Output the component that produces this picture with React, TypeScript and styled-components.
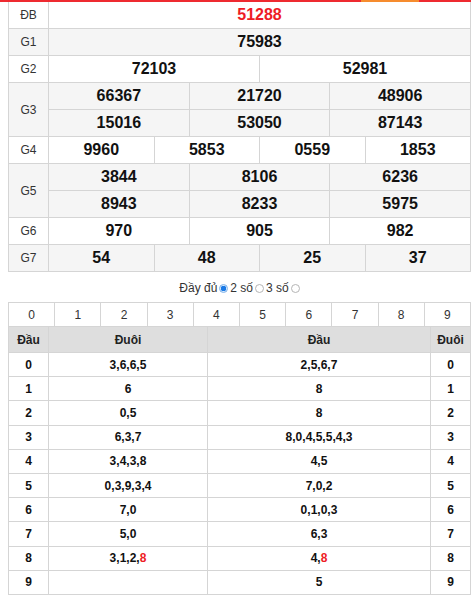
import React, { useState } from 'react';
import styled, { createGlobalStyle } from 'styled-components';

const Global = createGlobalStyle`
  html, body { margin: 0; padding: 0; background: #fff; }
  body { font-family: Arial, "Liberation Sans", sans-serif; color: #222; }
`;

const BORDER = '#d5d5d5';

const Page = styled.div`
  width: 471px;
`;

const TopBar = styled.div`
  height: 2px;
  background: linear-gradient(
    to right,
    #ee2a30 0,
    #ee2a30 361px,
    #f68c2e 361px,
    #f68c2e 419px,
    #ee2a30 419px
  );
`;

const Content = styled.div`
  padding-left: 8px;
`;

const PrizeGrid = styled.div`
  display: grid;
  grid-template-columns: 40px repeat(12, 1fr);
  width: 463px;
  box-sizing: border-box;
  border-left: 1px solid ${BORDER};
`;

const PrizeLabel = styled.div<{ $row: number; $rows: number; $alt: boolean }>`
  grid-column: 1;
  grid-row: ${p => p.$row} / span ${p => p.$rows};
  display: flex;
  align-items: center;
  justify-content: center;
  box-sizing: border-box;
  border-right: 1px solid ${BORDER};
  border-bottom: 1px solid ${BORDER};
  background: ${p => (p.$alt ? '#f5f5f5' : '#fff')};
  font-size: 12px;
  color: #333;
`;

const PrizeNum = styled.div<{ $row: number; $col: number; $span: number; $alt: boolean; $red?: boolean }>`
  grid-row: ${p => p.$row};
  grid-column: ${p => p.$col} / span ${p => p.$span};
  height: 27px;
  display: flex;
  align-items: center;
  justify-content: center;
  box-sizing: border-box;
  border-right: 1px solid ${BORDER};
  border-bottom: 1px solid ${BORDER};
  background: ${p => (p.$alt ? '#f5f5f5' : '#fff')};
  font-size: 16px;
  font-weight: bold;
  color: ${p => (p.$red ? '#ee1c25' : '#111')};
`;

const ModeBar = styled.div`
  display: flex;
  justify-content: center;
  align-items: center;
  gap: 2px;
  width: 463px;
  margin-top: 8px;
  height: 16px;
  margin-bottom: 6px;
  font-size: 12px;
  color: #333;
`;

const ModeOption = styled.label`
  display: inline-flex;
  align-items: center;
  gap: 2px;
  cursor: pointer;
`;

const Radio = styled.input.attrs({ type: 'radio' })`
  appearance: none;
  -webkit-appearance: none;
  width: 9px;
  height: 9px;
  margin: 1px 0 0 0;
  border-radius: 50%;
  box-sizing: border-box;
  border: 1px solid #b5b5b5;
  background: #fff;
  &:checked {
    border-color: #7fb3ea;
    background: radial-gradient(circle, #1a7ae6 0, #1a7ae6 2.6px, #d7e8fb 3px);
  }
`;

const DigitRow = styled.div`
  display: grid;
  grid-template-columns: repeat(10, 1fr);
  width: 463px;
  box-sizing: border-box;
  border-left: 1px solid ${BORDER};
  border-top: 1px solid ${BORDER};
`;

const DigitCell = styled.div`
  height: 24px;
  display: flex;
  align-items: center;
  justify-content: center;
  box-sizing: border-box;
  border-right: 1px solid ${BORDER};
  border-bottom: 1px solid ${BORDER};
  font-size: 12px;
  color: #333;
`;

const LotoGrid = styled.div`
  display: grid;
  grid-template-columns: 40px 159px 223px 40px;
  width: 463px;
  box-sizing: border-box;
  border-left: 1px solid ${BORDER};
`;

const LotoHead = styled.div`
  height: 26px;
  display: flex;
  align-items: center;
  justify-content: center;
  box-sizing: border-box;
  border-right: 1px solid ${BORDER};
  border-bottom: 1px solid ${BORDER};
  background: #dedede;
  font-size: 12px;
  font-weight: bold;
  color: #222;
`;

const LotoCell = styled.div`
  height: 24.2px;
  display: flex;
  align-items: center;
  justify-content: center;
  box-sizing: border-box;
  border-right: 1px solid ${BORDER};
  border-bottom: 1px solid ${BORDER};
  background: #fff;
  font-size: 12px;
  font-weight: bold;
  color: #111;
`;

const Hit = styled.span`
  color: #ee1c25;
`;

type Prize = { label: string; rows: string[][]; red?: boolean };

const prizes: Prize[] = [
  { label: 'ĐB', rows: [['51288']], red: true },
  { label: 'G1', rows: [['75983']] },
  { label: 'G2', rows: [['72103', '52981']] },
  { label: 'G3', rows: [['66367', '21720', '48906'], ['15016', '53050', '87143']] },
  { label: 'G4', rows: [['9960', '5853', '0559', '1853']] },
  { label: 'G5', rows: [['3844', '8106', '6236'], ['8943', '8233', '5975']] },
  { label: 'G6', rows: [['970', '905', '982']] },
  { label: 'G7', rows: [['54', '48', '25', '37']] },
];

type Digit = { v: string; hit?: boolean };
const d = (s: string, hits: number[] = []): Digit[] =>
  s ? s.split(',').map((v, i) => ({ v, hit: hits.includes(i) })) : [];

const loto: { tail: Digit[]; head: Digit[] }[] = [
  { tail: d('3,6,6,5'), head: d('2,5,6,7') },
  { tail: d('6'), head: d('8') },
  { tail: d('0,5'), head: d('8') },
  { tail: d('6,3,7'), head: d('8,0,4,5,5,4,3') },
  { tail: d('3,4,3,8'), head: d('4,5') },
  { tail: d('0,3,9,3,4'), head: d('7,0,2') },
  { tail: d('7,0'), head: d('0,1,0,3') },
  { tail: d('5,0'), head: d('6,3') },
  { tail: d('3,1,2,8', [3]), head: d('4,8', [1]) },
  { tail: d(''), head: d('5') },
];

const DigitList = ({ items }: { items: Digit[] }) => (
  <>
    {items.map((it, i) => (
      <React.Fragment key={i}>
        {i > 0 && ','}
        {it.hit ? <Hit>{it.v}</Hit> : it.v}
      </React.Fragment>
    ))}
  </>
);

export default function App() {
  const [mode, setMode] = useState('full');
  let rowCursor = 1;

  return (
    <Page>
      <Global />
      <TopBar />
      <Content>
        <PrizeGrid>
          {prizes.map((p, pi) => {
            const start = rowCursor;
            rowCursor += p.rows.length;
            const alt = pi % 2 === 1;
            return (
              <React.Fragment key={p.label}>
                <PrizeLabel $row={start} $rows={p.rows.length} $alt={alt}>
                  {p.label}
                </PrizeLabel>
                {p.rows.map((r, ri) =>
                  r.map((n, ni) => {
                    const span = 12 / r.length;
                    return (
                      <PrizeNum
                        key={`${ri}-${ni}`}
                        $row={start + ri}
                        $col={2 + ni * span}
                        $span={span}
                        $alt={alt}
                        $red={p.red}
                      >
                        {n}
                      </PrizeNum>
                    );
                  })
                )}
              </React.Fragment>
            );
          })}
        </PrizeGrid>

        <ModeBar>
          <ModeOption>
            Đầy đủ
            <Radio name="mode" checked={mode === 'full'} onChange={() => setMode('full')} />
          </ModeOption>
          <ModeOption>
            2 số
            <Radio name="mode" checked={mode === '2'} onChange={() => setMode('2')} />
          </ModeOption>
          <ModeOption>
            3 số
            <Radio name="mode" checked={mode === '3'} onChange={() => setMode('3')} />
          </ModeOption>
        </ModeBar>

        <DigitRow>
          {Array.from({ length: 10 }, (_, i) => (
            <DigitCell key={i}>{i}</DigitCell>
          ))}
        </DigitRow>

        <LotoGrid>
          <LotoHead>Đầu</LotoHead>
          <LotoHead>Đuôi</LotoHead>
          <LotoHead>Đầu</LotoHead>
          <LotoHead>Đuôi</LotoHead>
          {loto.map((row, i) => (
            <React.Fragment key={i}>
              <LotoCell>{i}</LotoCell>
              <LotoCell>
                <DigitList items={row.tail} />
              </LotoCell>
              <LotoCell>
                <DigitList items={row.head} />
              </LotoCell>
              <LotoCell>{i}</LotoCell>
            </React.Fragment>
          ))}
        </LotoGrid>
      </Content>
    </Page>
  );
}
